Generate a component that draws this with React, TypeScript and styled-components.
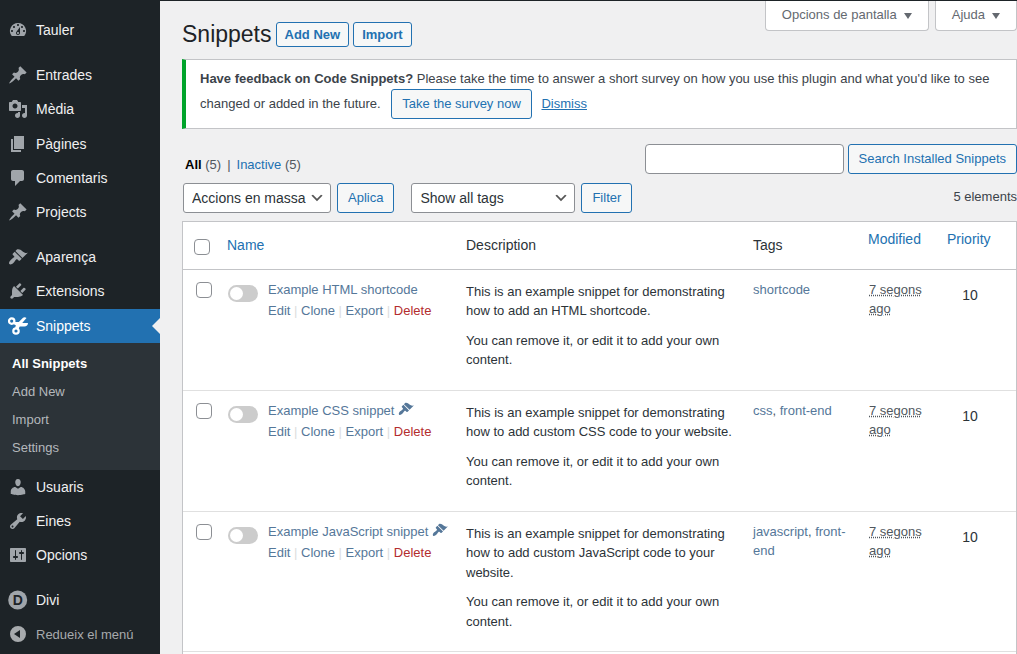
import React from 'react';
import styled, { createGlobalStyle } from 'styled-components';

const blue = '#2271b1';
const ink = '#2c3338';

const GlobalStyle = createGlobalStyle`
  *, *::before, *::after { box-sizing: border-box; }
  body {
    margin: 0;
    background: #f0f0f1;
    color: #3c434a;
    font-family: "Liberation Sans", Arial, sans-serif;
    font-size: 13px;
    line-height: 1.5;
  }
  a { color: ${blue}; text-decoration: none; }
  button, input, select { font-family: inherit; margin: 0; }
`;

const Page = styled.div`
  display: flex;
  min-height: 100vh;
`;

/* ---------- Sidebar ---------- */

const Sidebar = styled.nav`
  flex: 0 0 160px;
  padding-top: 13px;
  background: #1d2327;
`;

const MenuList = styled.ul`
  list-style: none;
  margin: 0;
  padding: 0;
`;

const MenuItem = styled.li<{ $gap?: boolean }>`
  margin-top: ${(p) => (p.$gap ? 11 : 0)}px;
`;

const MenuLink = styled.a<{ $current?: boolean }>`
  position: relative;
  display: flex;
  align-items: center;
  gap: 8px;
  padding: 8px;
  font-size: 14px;
  line-height: 1.3;
  color: ${(p) => (p.$current ? '#fff' : '#f0f0f1')};
  background: ${(p) => (p.$current ? blue : 'transparent')};

  svg {
    flex: none;
    margin: -1px 0;
    fill: ${(p) => (p.$current ? '#fff' : '#a0a5aa')};
  }

  &::after {
    content: ${(p) => (p.$current ? '""' : 'none')};
    position: absolute;
    right: 0;
    top: 50%;
    margin-top: -8px;
    border: 8px solid transparent;
    border-right-color: #f0f0f1;
  }
`;

const SubMenu = styled.ul`
  list-style: none;
  margin: 0;
  padding: 7px 0 8px;
  background: #2c3338;
`;

const SubLink = styled.a<{ $current?: boolean }>`
  display: block;
  padding: 5px 12px;
  line-height: 18px;
  font-weight: ${(p) => (p.$current ? 700 : 400)};
  color: ${(p) => (p.$current ? '#fff' : '#b4b8bc')};
`;

const CollapseButton = styled.button`
  display: flex;
  align-items: center;
  gap: 8px;
  width: 100%;
  height: 34px;
  padding: 0 8px;
  border: 0;
  background: none;
  color: #a7aaad;
  font-size: 13px;
  svg { flex: none; fill: #a7aaad; }
`;

/* ---------- Main column ---------- */

const Main = styled.main`
  flex: 1;
  min-width: 0;
  display: flex;
  flex-direction: column;
  padding-left: 22px;
  border-top: 1px solid #1d2327;
`;

const TopRow = styled.header`
  display: flex;
  justify-content: space-between;
  height: 58px;
`;

const TitleGroup = styled.div`
  display: flex;
  align-items: center;
  gap: 4px;
  padding-top: 8px;
`;

const Title = styled.h1`
  margin: 0;
  font-size: 23px;
  font-weight: 400;
  line-height: 30px;
  color: #1d2327;
`;

const TitleLink = styled.a`
  padding: 0 8px;
  border: 1px solid ${blue};
  border-radius: 3px;
  background: #f6f7f7;
  font-weight: 700;
  line-height: 23px;
`;

const ScreenTabs = styled.div`
  display: flex;
  align-items: flex-start;
  gap: 6px;
`;

const ScreenTab = styled.button`
  display: flex;
  align-items: center;
  gap: 7px;
  height: 30px;
  padding: 0 16px 2px;
  border: 1px solid #c3c4c7;
  border-top: 0;
  border-radius: 0 0 4px 4px;
  background: #fff;
  color: #646970;
  font-size: 13px;
  svg { fill: #646970; margin-top: 2px; }
`;

const Notice = styled.section`
  padding: 9px 12px 9px 14px;
  border: 1px solid #c3c4c7;
  border-left: 4px solid #00a32a;
  background: #fff;
`;

const NoticeText = styled.p`
  margin: 0;
`;

const Button = styled.button`
  height: 30px;
  padding: 0 10px;
  border: 1px solid ${blue};
  border-radius: 3px;
  background: #f6f7f7;
  color: ${blue};
  font-size: 13px;
  line-height: 28px;
  white-space: nowrap;
`;

const SurveyButton = styled(Button)`
  margin: 0 6px 0 7px;
`;

const DismissLink = styled.a`
  text-decoration: underline;
`;

const FilterRow = styled.div`
  display: flex;
  align-items: flex-end;
  justify-content: space-between;
  margin-top: 15px;
`;

const Views = styled.ul`
  list-style: none;
  display: flex;
  gap: 6px;
  margin: 0;
  padding-left: 3px;
  line-height: 18px;
  color: #50575e;
  strong { color: #000; }
`;

const SearchForm = styled.form`
  display: flex;
  gap: 4px;
`;

const SearchInput = styled.input`
  width: 199px;
  height: 30px;
  padding: 0 8px;
  border: 1px solid #8c8f94;
  border-radius: 4px;
  background: #fff;
  color: ${ink};
  font-size: 14px;
`;

const BulkRow = styled.div`
  display: flex;
  align-items: center;
  gap: 6px;
  height: 30px;
  margin: 9px 0 8px;
  padding-left: 1px;
`;

const SelectBox = styled.div<{ $width: number }>`
  display: grid;
  width: ${(p) => p.$width}px;
  > * { grid-area: 1 / 1; }
  svg {
    justify-self: end;
    align-self: center;
    margin-right: 6px;
    pointer-events: none;
  }
`;

const Select = styled.select`
  appearance: none;
  width: 100%;
  height: 30px;
  padding: 0 24px 0 8px;
  border: 1px solid #8c8f94;
  border-radius: 3px;
  background: #fff;
  color: ${ink};
  font-size: 14px;
`;

const BulkGroup = styled.div`
  display: flex;
  gap: 6px;
  margin-right: 11px;
`;

const Count = styled.span`
  margin-left: auto;
  padding-bottom: 2px;
`;

/* ---------- Table ---------- */

const TablePanel = styled.div`
  flex: 1;
  border: 1px solid #c3c4c7;
  border-bottom: 0;
  background: #fff;
`;

const Table = styled.table`
  width: 100%;
  table-layout: fixed;
  border-collapse: separate;
  border-spacing: 0;
`;

const Col = styled.col<{ $width?: number }>`
  width: ${(p) => (p.$width ? `${p.$width}px` : 'auto')};
`;

const HeadCell = styled.th<{ $top?: boolean }>`
  height: 48px;
  padding: ${(p) => (p.$top ? '8px 9px' : '0 10px')};
  border-bottom: 1px solid #c3c4c7;
  vertical-align: ${(p) => (p.$top ? 'top' : 'middle')};
  text-align: left;
  font-size: 14px;
  font-weight: 400;
  line-height: 18px;
  color: ${ink};
`;

const HeadCheckCell = styled(HeadCell)`
  padding: 3px 0 0 11px;
`;

const HeadNameCell = styled(HeadCell)`
  padding: 0 9px;
`;

const Cell = styled.td`
  padding: 10px;
  border-bottom: 1px solid #e0e0e0;
  vertical-align: top;
  color: #50575e;
  a { color: #557799; }
`;

const CheckCell = styled(Cell)`
  padding: 12px 0 0 13px;
`;

const Checkbox = styled.input`
  appearance: none;
  display: block;
  width: 16px;
  height: 16px;
  border: 1px solid #8c8f94;
  border-radius: 4px;
  background: #fff;
`;

const NameLayout = styled.div`
  display: flex;
  gap: 10px;
`;

const Switch = styled.input`
  appearance: none;
  flex: none;
  display: flex;
  align-items: center;
  width: 30px;
  height: 17px;
  margin-top: 5px;
  padding: 0 2px;
  border-radius: 9px;
  background: #ccc;
  &::before {
    content: "";
    width: 13px;
    height: 13px;
    border-radius: 50%;
    background: #fff;
  }
`;

const NameLink = styled.a`
  white-space: nowrap;
  svg { fill: #557799; vertical-align: top; margin-left: 4px; }
`;

const RowActions = styled.div`
  padding-top: 2px;
  color: #ddd;
  white-space: nowrap;
`;

const DeleteLink = styled.a`
  && { color: #b32d2e; }
`;

const DescCell = styled(Cell)`
  padding: 12px 10px 20px;
  color: ${ink};
  p { margin: 0; }
  p + p { margin-top: 10px; }
`;

const PriorityCell = styled(Cell)`
  padding: 10px 0;
`;

const PriorityInput = styled.input`
  appearance: textfield;
  display: block;
  width: 64px;
  height: 30px;
  padding: 0;
  border: 0;
  background: transparent;
  color: ${ink};
  font-size: 14px;
  text-align: center;
  &::-webkit-inner-spin-button { appearance: none; }
`;

/* ---------- Icons ---------- */

const paths = {
  dashboard:
    'M3.76 16h12.48A7.998 7.998 0 0 0 10 3a7.998 7.998 0 0 0-6.24 13zM10 4c.55 0 1 .45 1 1s-.45 1-1 1-1-.45-1-1 .45-1 1-1zM6 6c.55 0 1 .45 1 1s-.45 1-1 1-1-.45-1-1 .45-1 1-1zm8 0c.55 0 1 .45 1 1s-.45 1-1 1-1-.45-1-1 .45-1 1-1zm-5.37 5.55L12 7v6c0 1.1-.9 2-2 2s-2-.9-2-2c0-.57.24-1.08.63-1.45zM4 10c.55 0 1 .45 1 1s-.45 1-1 1-1-.45-1-1 .45-1 1-1zm12 0c.55 0 1 .45 1 1s-.45 1-1 1-1-.45-1-1 .45-1 1-1zm-5 3c0-.55-.45-1-1-1s-1 .45-1 1 .45 1 1 1 1-.45 1-1z',
  pin:
    'M10.44 3.02l1.82-1.82 6.36 6.35-1.83 1.82c-1.05-.68-2.48-.57-3.41.36l-.75.75c-.92.93-1.04 2.35-.35 3.41l-1.83 1.82-2.41-2.41-2.8 2.79c-.42.42-3.38 2.71-3.8 2.29s1.86-3.39 2.28-3.81l2.79-2.79L4.1 9.36l1.83-1.82c1.05.69 2.48.57 3.4-.36l.75-.75c.93-.92 1.05-2.35.36-3.41z',
  media:
    'M13 11V4c0-.55-.45-1-1-1h-1.67L9 1H5L3.67 3H2c-.55 0-1 .45-1 1v7c0 .55.45 1 1 1h10c.55 0 1-.45 1-1zM7 4.5c1.38 0 2.5 1.12 2.5 2.5S8.38 9.5 7 9.5 4.5 8.38 4.5 7 5.62 4.5 7 4.5zM14 6h5v10.5c0 1.38-1.12 2.5-2.5 2.5S14 17.88 14 16.5s1.12-2.5 2.5-2.5c.17 0 .34.02.5.05V9h-3V6zm-4 8.05V13h2v3.5c0 1.38-1.12 2.5-2.5 2.5S7 17.88 7 16.5 8.12 14 9.5 14c.17 0 .34.02.5.05z',
  page: 'M6 15V2h10v13H6zm-1 1h8v2H3V5h2v11z',
  comment:
    'M5 2h9c1.1 0 2 .9 2 2v7c0 1.1-.9 2-2 2h-2l-5 5v-5H5c-1.1 0-2-.9-2-2V4c0-1.1.9-2 2-2z',
  brush:
    'M14.48 11.06L7.41 3.99l1.5-1.5c.5-.56 2.3-.47 3.51.32 1.21.8 1.43 1.28 2.91 2.1 1.18.64 2.45 1.26 4.45.85zm-.71.71L6.7 4.7 4.93 6.47c-.39.39-.39 1.02 0 1.41l1.06 1.06c.39.39.39 1.03 0 1.42-.6.6-1.43 1.11-2.21 1.69-.35.26-.7.53-1.01.84C1.43 14.23.4 16.08 1.4 17.07c.99 1 2.84-.03 4.18-1.36.31-.31.58-.66.85-1.02.57-.78 1.08-1.61 1.69-2.21.39-.39 1.02-.39 1.41 0l1.06 1.06c.39.39 1.02.39 1.41 0z',
  plug:
    'M13.11 4.36L9.87 7.6 8 5.73l3.24-3.24c.35-.34 1.05-.2 1.56.32.52.51.66 1.21.31 1.55zm-8 1.77l.91-1.12 9.01 9.01-1.19.84c-.71.71-2.63 1.16-3.82 1.16H6.14L4.9 17.26c-.59.59-1.54.59-2.12 0-.59-.58-.59-1.53 0-2.12l1.24-1.24v-3.88c0-1.13.4-3.19 1.09-3.89zm7.26 3.97l3.24-3.24c.34-.35 1.04-.21 1.55.31.52.51.66 1.21.31 1.55l-3.24 3.25z',
  user:
    'M10 9.25c-2.27 0-2.73-3.44-2.73-3.44C7 4.02 7.82 2 9.97 2c2.16 0 2.98 2.02 2.71 3.81 0 0-.41 3.44-2.68 3.44zm0 2.57L12.72 10c2.39 0 4.52 2.33 4.52 4.53v2.49s-3.65 1.13-7.24 1.13c-3.65 0-7.24-1.13-7.24-1.13v-2.49c0-2.25 1.94-4.48 4.47-4.48z',
  wrench:
    'M16.68 9.77c-1.34 1.34-3.3 1.67-4.95.99l-5.41 6.52c-.99.99-2.59.99-3.58 0s-.99-2.59 0-3.57l6.52-5.42c-.68-1.65-.35-3.61.99-4.95 1.28-1.28 3.12-1.62 4.72-1.06l-2.89 2.89 2.82 2.82 2.86-2.87c.53 1.58.18 3.39-1.08 4.65zM3.81 16.21c.4.39 1.04.39 1.43 0 .4-.4.4-1.04 0-1.43-.39-.4-1.03-.4-1.43 0-.39.39-.39 1.03 0 1.43z',
  sliders:
    'M18 16V4c0-.55-.45-1-1-1H3c-.55 0-1 .45-1 1v12c0 .55.45 1 1 1h14c.55 0 1-.45 1-1zM8 11h1c.55 0 1 .45 1 1s-.45 1-1 1H8v1.5c0 .28-.22.5-.5.5s-.5-.22-.5-.5V13H6c-.55 0-1-.45-1-1s.45-1 1-1h1V5.5c0-.28.22-.5.5-.5s.5.22.5.5V11zm5-2h-1c-.55 0-1-.45-1-1s.45-1 1-1h1V5.5c0-.28.22-.5.5-.5s.5.22.5.5V7h1c.55 0 1 .45 1 1s-.45 1-1 1h-1v5.5c0 .28-.22.5-.5.5s-.5-.22-.5-.5V9z',
  collapse: 'M10 2a8 8 0 1 0 0 16 8 8 0 0 0 0-16zm2 4v8l-6-4z',
};

type IconName = keyof typeof paths | 'scissors' | 'divi';

function Icon({ name, size = 20 }: { name: IconName; size?: number }) {
  if (name === 'scissors') {
    return (
      <svg width={size} height={size} viewBox="0 0 20 20" aria-hidden="true">
        <g fill="none" stroke="#fff" strokeWidth="2.2">
          <circle cx="3.7" cy="5.1" r="2.7" />
          <circle cx="8" cy="15" r="2.7" />
        </g>
        <path d="M5.5 6h5.300L15 1.800c1-1 2.600-.8 3.500.2L14.200 7H20c0 2-1.500 3.500-3.600 3.500h-4.600L10.200 13.200 7 12.600 7.800 9.200 4.800 7.800z" />
      </svg>
    );
  }
  if (name === 'divi') {
    return (
      <svg width={size} height={size} viewBox="0 0 20 20" aria-hidden="true">
        <circle cx="9.7" cy="10" r="9.5" />
        <text x="9.9" y="15" textAnchor="middle" fontSize="14" fontWeight="700" fill="#1d2327">
          D
        </text>
      </svg>
    );
  }
  return (
    <svg width={size} height={size} viewBox="0 0 20 20" aria-hidden="true">
      <path fillRule="evenodd" d={paths[name]} />
    </svg>
  );
}

const Caret = () => (
  <svg width="8" height="6" viewBox="0 0 8 6" aria-hidden="true">
    <path d="M0 0h8L4 6z" />
  </svg>
);

const Chevron = () => (
  <svg width="16" height="16" viewBox="0 0 20 20" aria-hidden="true">
    <path d="M5 6l5 5 5-5 2 1-7 7-7-7 2-1z" fill="#555" />
  </svg>
);

/* ---------- Data ---------- */

const menu: { label: string; icon: IconName; gap?: boolean; children?: string[] }[] = [
  { label: 'Tauler', icon: 'dashboard' },
  { label: 'Entrades', icon: 'pin', gap: true },
  { label: 'Mèdia', icon: 'media' },
  { label: 'Pàgines', icon: 'page' },
  { label: 'Comentaris', icon: 'comment' },
  { label: 'Projects', icon: 'pin' },
  { label: 'Aparença', icon: 'brush', gap: true },
  { label: 'Extensions', icon: 'plug' },
  { label: 'Snippets', icon: 'scissors', children: ['All Snippets', 'Add New', 'Import', 'Settings'] },
  { label: 'Usuaris', icon: 'user' },
  { label: 'Eines', icon: 'wrench' },
  { label: 'Opcions', icon: 'sliders' },
  { label: 'Divi', icon: 'divi', gap: true },
];

const removeNote = 'You can remove it, or edit it to add your own content.';

const snippets = [
  {
    name: 'Example HTML shortcode',
    styled: false,
    text: 'This is an example snippet for demonstrating how to add an HTML shortcode.',
    tags: ['shortcode'],
  },
  {
    name: 'Example CSS snippet',
    styled: true,
    text: 'This is an example snippet for demonstrating how to add custom CSS code to your website.',
    tags: ['css', 'front-end'],
  },
  {
    name: 'Example JavaScript snippet',
    styled: true,
    text: 'This is an example snippet for demonstrating how to add custom JavaScript code to your website.',
    tags: ['javascript', 'front-end'],
  },
];

function SnippetRow({ snippet }: { snippet: (typeof snippets)[number] }) {
  return (
    <tr>
      <CheckCell>
        <Checkbox type="checkbox" aria-label={snippet.name} />
      </CheckCell>
      <Cell>
        <NameLayout>
          <Switch type="checkbox" role="switch" aria-label={snippet.name} />
          <div>
            <NameLink href="#">
              {snippet.name}
              {snippet.styled && <Icon name="brush" size={16} />}
            </NameLink>
            <RowActions>
              <a href="#">Edit</a> | <a href="#">Clone</a> | <a href="#">Export</a> |{' '}
              <DeleteLink href="#">Delete</DeleteLink>
            </RowActions>
          </div>
        </NameLayout>
      </Cell>
      <DescCell>
        <p>{snippet.text}</p>
        <p>{removeNote}</p>
      </DescCell>
      <Cell>
        {snippet.tags.map((tag, i) => (
          <React.Fragment key={tag}>
            {i > 0 && ', '}
            <a href="#">{tag}</a>
          </React.Fragment>
        ))}
      </Cell>
      <Cell>
        <abbr title="7 segons ago">7 segons ago</abbr>
      </Cell>
      <PriorityCell>
        <PriorityInput type="number" defaultValue={10} aria-label="Priority" />
      </PriorityCell>
    </tr>
  );
}

export default function App() {
  return (
    <>
      <GlobalStyle />
      <Page>
        <Sidebar>
          <MenuList>
            {menu.map((item) => (
              <MenuItem key={item.label} $gap={item.gap}>
                <MenuLink href="#" $current={!!item.children}>
                  <Icon name={item.icon} />
                  {item.label}
                </MenuLink>
                {item.children && (
                  <SubMenu>
                    {item.children.map((child, i) => (
                      <li key={child}>
                        <SubLink href="#" $current={i === 0}>
                          {child}
                        </SubLink>
                      </li>
                    ))}
                  </SubMenu>
                )}
              </MenuItem>
            ))}
          </MenuList>
          <CollapseButton type="button">
            <Icon name="collapse" />
            Redueix el menú
          </CollapseButton>
        </Sidebar>
        <Main>
          <TopRow>
            <TitleGroup>
              <Title>Snippets</Title>
              <TitleLink href="#">Add New</TitleLink>
              <TitleLink href="#">Import</TitleLink>
            </TitleGroup>
            <ScreenTabs>
              <ScreenTab type="button">
                Opcions de pantalla <Caret />
              </ScreenTab>
              <ScreenTab type="button">
                Ajuda <Caret />
              </ScreenTab>
            </ScreenTabs>
          </TopRow>

          <Notice>
            <NoticeText>
              <strong>Have feedback on Code Snippets?</strong> Please take the time to answer a short survey on how
              you use this plugin and what you'd like to see changed or added in the future.{' '}
              <SurveyButton type="button">Take the survey now</SurveyButton>{' '}
              <DismissLink href="#">Dismiss</DismissLink>
            </NoticeText>
          </Notice>

          <FilterRow>
            <Views>
              <li>
                <strong>All</strong> (5)
              </li>
              <li aria-hidden="true">|</li>
              <li>
                <a href="#">Inactive</a> (5)
              </li>
            </Views>
            <SearchForm>
              <SearchInput type="search" aria-label="Search Installed Snippets" />
              <Button type="submit">Search Installed Snippets</Button>
            </SearchForm>
          </FilterRow>

          <BulkRow>
            <BulkGroup>
              <SelectBox $width={148}>
                <Select aria-label="Accions en massa">
                  <option>Accions en massa</option>
                </Select>
                <Chevron />
              </SelectBox>
              <Button type="button">Aplica</Button>
            </BulkGroup>
            <SelectBox $width={164}>
              <Select aria-label="Show all tags">
                <option>Show all tags</option>
              </Select>
              <Chevron />
            </SelectBox>
            <Button type="button">Filter</Button>
            <Count>5 elements</Count>
          </BulkRow>

          <TablePanel>
            <Table>
              <colgroup>
                <Col $width={35} />
                <Col $width={238} />
                <Col />
                <Col $width={116} />
                <Col $width={79} />
                <Col $width={78} />
              </colgroup>
              <thead>
                <tr>
                  <HeadCheckCell>
                    <Checkbox type="checkbox" aria-label="Select all" />
                  </HeadCheckCell>
                  <HeadNameCell>
                    <a href="#">Name</a>
                  </HeadNameCell>
                  <HeadCell>Description</HeadCell>
                  <HeadCell>Tags</HeadCell>
                  <HeadCell $top>
                    <a href="#">Modified</a>
                  </HeadCell>
                  <HeadCell $top>
                    <a href="#">Priority</a>
                  </HeadCell>
                </tr>
              </thead>
              <tbody>
                {snippets.map((s) => (
                  <SnippetRow key={s.name} snippet={s} />
                ))}
              </tbody>
            </Table>
          </TablePanel>
        </Main>
      </Page>
    </>
  );
}
